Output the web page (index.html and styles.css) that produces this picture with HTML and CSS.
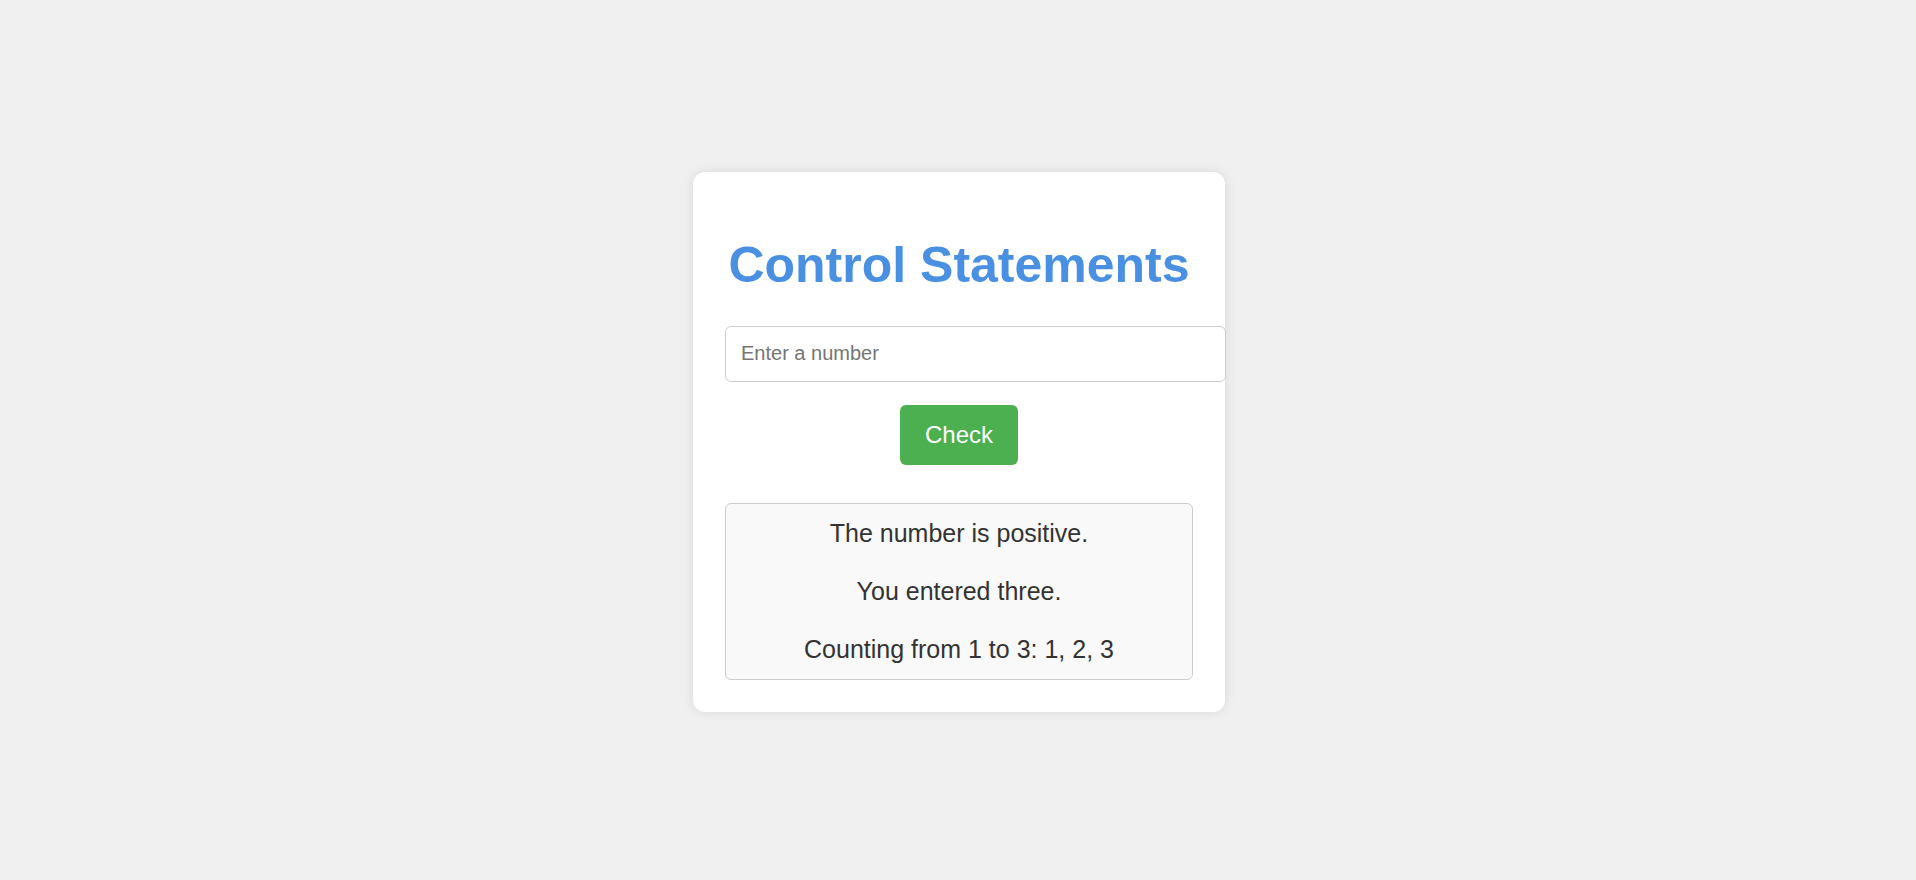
FILE: index.html
```html
<!DOCTYPE html>
<html lang="en">
<head>
<meta charset="utf-8">
<title>Control Statements</title>
<link rel="stylesheet" href="styles.css">
</head>
<body>
  <main class="card">
    <h1 class="title">Control Statements</h1>
    <input class="number-input" type="number" placeholder="Enter a number">
    <div class="actions">
      <button class="check-btn" type="button">Check</button>
    </div>
    <div class="output">
      <p>The number is positive.</p>
      <p>You entered three.</p>
      <p>Counting from 1 to 3: 1, 2, 3</p>
    </div>
  </main>
</body>
</html>
```

FILE: styles.css
```css
html, body {
  margin: 0;
  padding: 0;
}

body {
  min-height: 100vh;
  box-sizing: border-box;
  padding-top: 4px;
  padding-left: 2px;
  background: #f0f0f0;
  font-family: "Liberation Sans", Arial, sans-serif;
  display: flex;
  justify-content: center;
  align-items: center;
}

.card {
  width: 468px;
  padding: 32px;
  background: #ffffff;
  border-radius: 12px;
  box-shadow: 0 0 12px rgba(0, 0, 0, 0.1);
  text-align: center;
}

.title {
  margin: 33px 0 31px;
  font-size: 50px;
  font-weight: bold;
  line-height: 57.5px;
  color: #4a90e2;
}

.number-input {
  display: block;
  width: 100%;
  height: 24px;
  padding: 15px 16px 15px 15px;
  margin: 0;
  border: 1px solid #cccccc;
  border-radius: 6px;
  font-family: "Liberation Sans", Arial, sans-serif;
  font-size: 20px;
  color: #333333;
  background: #ffffff;
  outline: none;
  -moz-appearance: textfield;
}

.number-input::placeholder {
  color: #757575;
}

.number-input::-webkit-outer-spin-button,
.number-input::-webkit-inner-spin-button {
  -webkit-appearance: none;
  margin: 0;
}

.actions {
  display: flex;
  justify-content: center;
  margin-top: 23px;
}

.check-btn {
  height: 60px;
  padding: 0 25px;
  border: none;
  border-radius: 6px;
  background: #4caf50;
  color: #ffffff;
  font-family: "Liberation Sans", Arial, sans-serif;
  font-size: 24px;
  cursor: pointer;
}

.output {
  margin-top: 38px;
  padding: 15px;
  border: 1px solid #cccccc;
  border-radius: 6px;
  background: #f9f9f9;
  display: flex;
  flex-direction: column;
  gap: 29px;
}

.output p {
  margin: 0;
  font-size: 25px;
  line-height: 29px;
  color: #333333;
}
```
